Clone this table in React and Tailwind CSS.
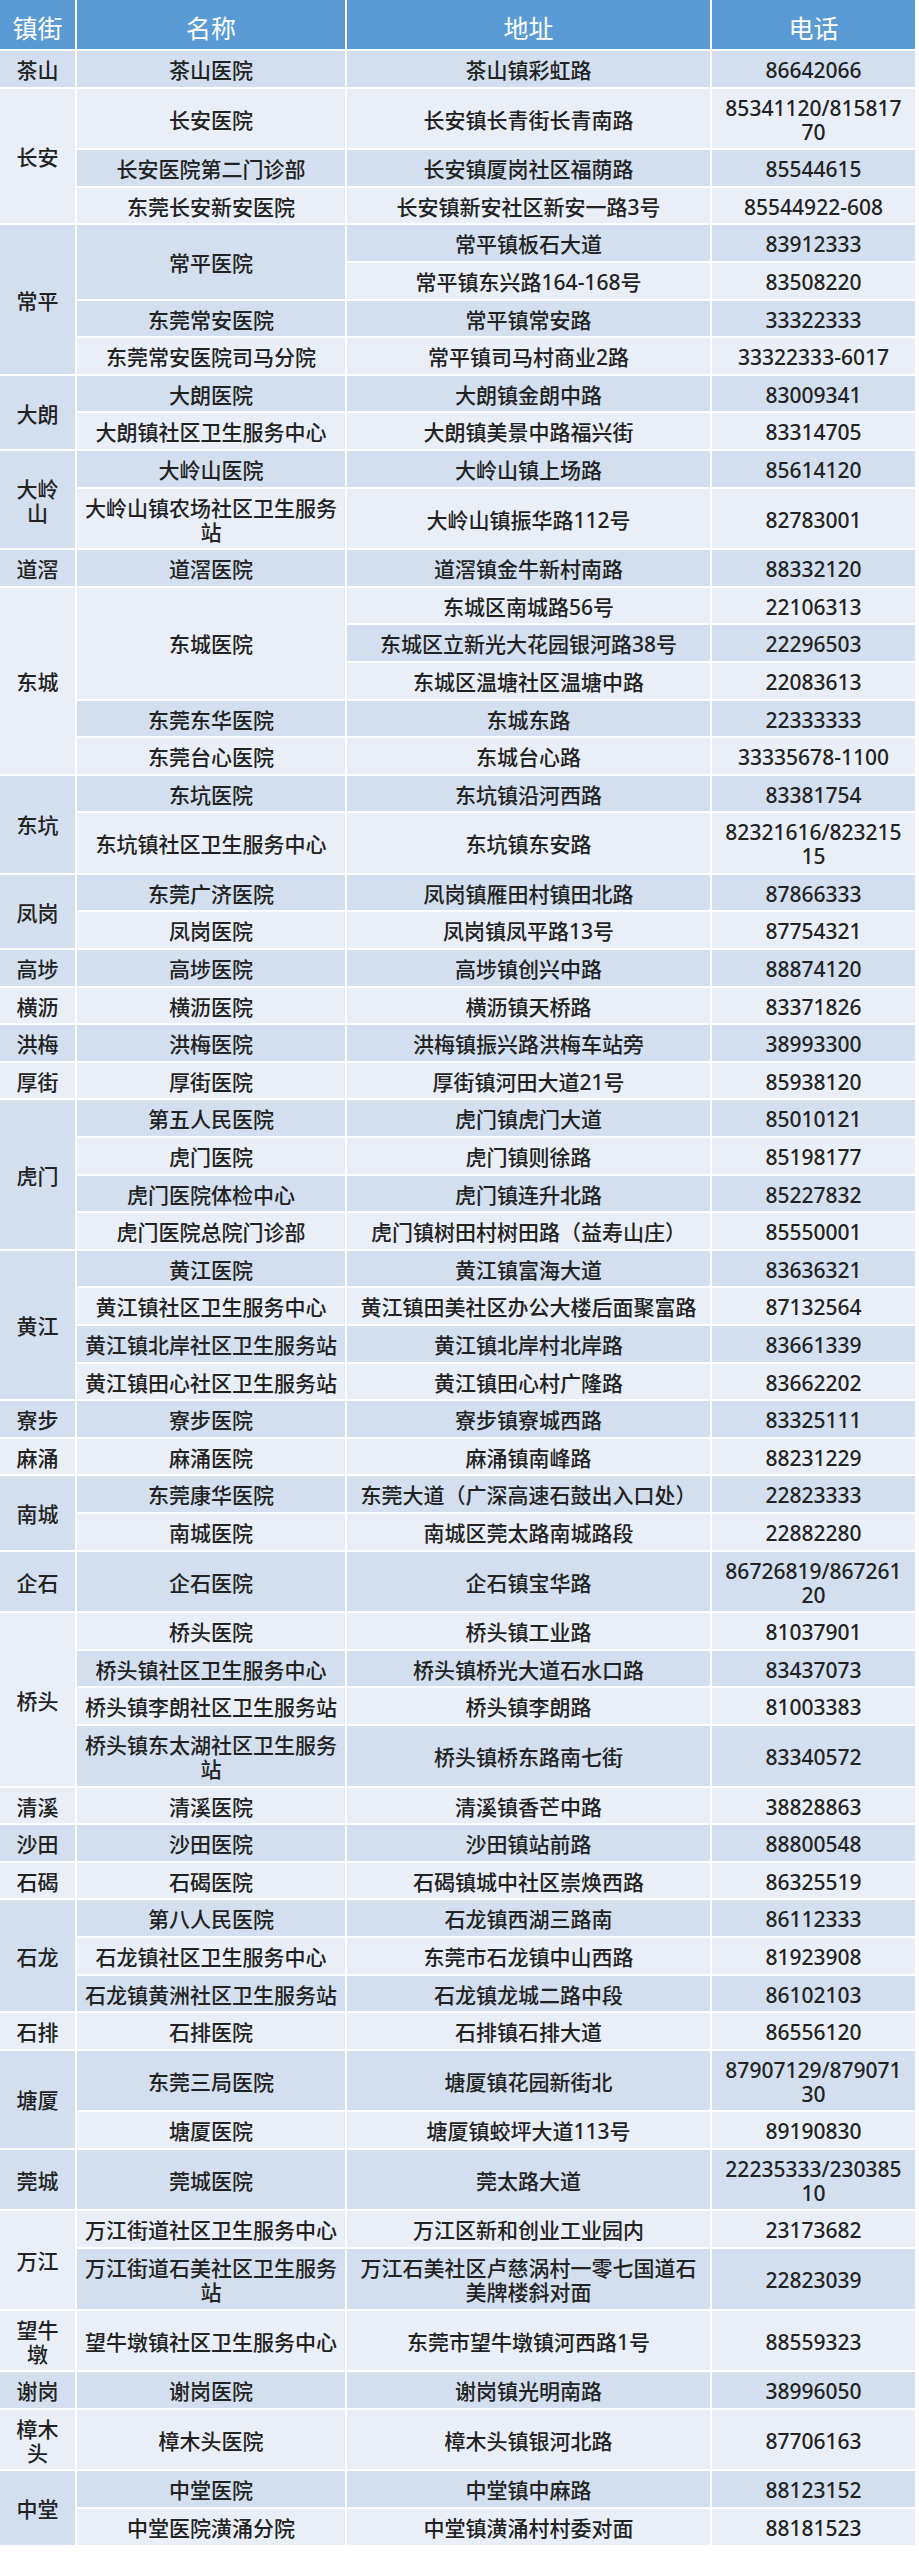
import React from 'react';

// 东莞各镇街医院一览表
const rows = [
  { town: '茶山', name: '茶山医院', addr: '茶山镇彩虹路', phone: '86642066' },
  { town: '长安', townSpan: 3, name: '长安医院', addr: '长安镇长青街长青南路', phone: '85341120/815817\n70' },
  { name: '长安医院第二门诊部', addr: '长安镇厦岗社区福荫路', phone: '85544615' },
  { name: '东莞长安新安医院', addr: '长安镇新安社区新安一路3号', phone: '85544922-608' },
  { town: '常平', townSpan: 4, name: '常平医院', nameSpan: 2, addr: '常平镇板石大道', phone: '83912333' },
  { addr: '常平镇东兴路164-168号', phone: '83508220' },
  { name: '东莞常安医院', addr: '常平镇常安路', phone: '33322333' },
  { name: '东莞常安医院司马分院', addr: '常平镇司马村商业2路', phone: '33322333-6017' },
  { town: '大朗', townSpan: 2, name: '大朗医院', addr: '大朗镇金朗中路', phone: '83009341' },
  { name: '大朗镇社区卫生服务中心', addr: '大朗镇美景中路福兴街', phone: '83314705' },
  { town: '大岭\n山', townSpan: 2, name: '大岭山医院', addr: '大岭山镇上场路', phone: '85614120' },
  { name: '大岭山镇农场社区卫生服务\n站', addr: '大岭山镇振华路112号', phone: '82783001' },
  { town: '道滘', name: '道滘医院', addr: '道滘镇金牛新村南路', phone: '88332120' },
  { town: '东城', townSpan: 5, name: '东城医院', nameSpan: 3, addr: '东城区南城路56号', phone: '22106313' },
  { addr: '东城区立新光大花园银河路38号', phone: '22296503' },
  { addr: '东城区温塘社区温塘中路', phone: '22083613' },
  { name: '东莞东华医院', addr: '东城东路', phone: '22333333' },
  { name: '东莞台心医院', addr: '东城台心路', phone: '33335678-1100' },
  { town: '东坑', townSpan: 2, name: '东坑医院', addr: '东坑镇沿河西路', phone: '83381754' },
  { name: '东坑镇社区卫生服务中心', addr: '东坑镇东安路', phone: '82321616/823215\n15' },
  { town: '凤岗', townSpan: 2, name: '东莞广济医院', addr: '凤岗镇雁田村镇田北路', phone: '87866333' },
  { name: '凤岗医院', addr: '凤岗镇凤平路13号', phone: '87754321' },
  { town: '高埗', name: '高埗医院', addr: '高埗镇创兴中路', phone: '88874120' },
  { town: '横沥', name: '横沥医院', addr: '横沥镇天桥路', phone: '83371826' },
  { town: '洪梅', name: '洪梅医院', addr: '洪梅镇振兴路洪梅车站旁', phone: '38993300' },
  { town: '厚街', name: '厚街医院', addr: '厚街镇河田大道21号', phone: '85938120' },
  { town: '虎门', townSpan: 4, name: '第五人民医院', addr: '虎门镇虎门大道', phone: '85010121' },
  { name: '虎门医院', addr: '虎门镇则徐路', phone: '85198177' },
  { name: '虎门医院体检中心', addr: '虎门镇连升北路', phone: '85227832' },
  { name: '虎门医院总院门诊部', addr: '虎门镇树田村树田路（益寿山庄）', phone: '85550001' },
  { town: '黄江', townSpan: 4, name: '黄江医院', addr: '黄江镇富海大道', phone: '83636321' },
  { name: '黄江镇社区卫生服务中心', addr: '黄江镇田美社区办公大楼后面聚富路', phone: '87132564' },
  { name: '黄江镇北岸社区卫生服务站', addr: '黄江镇北岸村北岸路', phone: '83661339' },
  { name: '黄江镇田心社区卫生服务站', addr: '黄江镇田心村广隆路', phone: '83662202' },
  { town: '寮步', name: '寮步医院', addr: '寮步镇寮城西路', phone: '83325111' },
  { town: '麻涌', name: '麻涌医院', addr: '麻涌镇南峰路', phone: '88231229' },
  { town: '南城', townSpan: 2, name: '东莞康华医院', addr: '东莞大道（广深高速石鼓出入口处）', phone: '22823333' },
  { name: '南城医院', addr: '南城区莞太路南城路段', phone: '22882280' },
  { town: '企石', name: '企石医院', addr: '企石镇宝华路', phone: '86726819/867261\n20' },
  { town: '桥头', townSpan: 4, name: '桥头医院', addr: '桥头镇工业路', phone: '81037901' },
  { name: '桥头镇社区卫生服务中心', addr: '桥头镇桥光大道石水口路', phone: '83437073' },
  { name: '桥头镇李朗社区卫生服务站', addr: '桥头镇李朗路', phone: '81003383' },
  { name: '桥头镇东太湖社区卫生服务\n站', addr: '桥头镇桥东路南七街', phone: '83340572' },
  { town: '清溪', name: '清溪医院', addr: '清溪镇香芒中路', phone: '38828863' },
  { town: '沙田', name: '沙田医院', addr: '沙田镇站前路', phone: '88800548' },
  { town: '石碣', name: '石碣医院', addr: '石碣镇城中社区崇焕西路', phone: '86325519' },
  { town: '石龙', townSpan: 3, name: '第八人民医院', addr: '石龙镇西湖三路南', phone: '86112333' },
  { name: '石龙镇社区卫生服务中心', addr: '东莞市石龙镇中山西路', phone: '81923908' },
  { name: '石龙镇黄洲社区卫生服务站', addr: '石龙镇龙城二路中段', phone: '86102103' },
  { town: '石排', name: '石排医院', addr: '石排镇石排大道', phone: '86556120' },
  { town: '塘厦', townSpan: 2, name: '东莞三局医院', addr: '塘厦镇花园新街北', phone: '87907129/879071\n30' },
  { name: '塘厦医院', addr: '塘厦镇蛟坪大道113号', phone: '89190830' },
  { town: '莞城', name: '莞城医院', addr: '莞太路大道', phone: '22235333/230385\n10' },
  { town: '万江', townSpan: 2, name: '万江街道社区卫生服务中心', addr: '万江区新和创业工业园内', phone: '23173682' },
  { name: '万江街道石美社区卫生服务\n站', addr: '万江石美社区卢慈涡村一零七国道石\n美牌楼斜对面', phone: '22823039' },
  { town: '望牛\n墩', name: '望牛墩镇社区卫生服务中心', addr: '东莞市望牛墩镇河西路1号', phone: '88559323' },
  { town: '谢岗', name: '谢岗医院', addr: '谢岗镇光明南路', phone: '38996050' },
  { town: '樟木\n头', name: '樟木头医院', addr: '樟木头镇银河北路', phone: '87706163' },
  { town: '中堂', townSpan: 2, name: '中堂医院', addr: '中堂镇中麻路', phone: '88123152' },
  { name: '中堂医院潢涌分院', addr: '中堂镇潢涌村村委对面', phone: '88181523' },
];

function Lines({ text }) {
  const parts = text.split('\n');
  return parts.map((p, i) => (
    <React.Fragment key={i}>
      {i > 0 && <br />}
      {p}
    </React.Fragment>
  ));
}

const cell = 'border-r-2 border-b-2 border-white px-[6px] pt-[7px] pb-[4.6px] text-center align-middle leading-[24px] whitespace-nowrap';
const head = 'border-r-2 border-b-2 border-white pt-[13px] pb-[6px] text-center align-middle leading-[30px] text-[25px] font-normal text-white';

export default function App() {
  return (
    <div className="bg-white w-[919px] pb-[8px]" style={{ fontFamily: '"Noto Sans", "Noto Sans CJK SC", sans-serif' }}>
      <table className="table-fixed border-separate border-spacing-0 w-[917px] text-[21px] font-medium text-[#222222]">
        <colgroup>
          <col className="w-[77px]" />
          <col className="w-[270px]" />
          <col className="w-[365px]" />
          <col className="w-[205px]" />
        </colgroup>
        <thead>
          <tr className="bg-[#5b9bd5]">
            <th className={head}>镇街</th>
            <th className={head}>名称</th>
            <th className={head}>地址</th>
            <th className={head}>电话</th>
          </tr>
        </thead>
        <tbody>
          {rows.map((r, i) => (
            <tr key={i} className={i % 2 === 0 ? 'bg-[#d3dfee]' : 'bg-[#eaeff7]'}>
              {r.town && (
                <td rowSpan={r.townSpan || 1} className={cell}>
                  <Lines text={r.town} />
                </td>
              )}
              {r.name && (
                <td rowSpan={r.nameSpan || 1} className={cell}>
                  <Lines text={r.name} />
                </td>
              )}
              <td className={cell}>
                <Lines text={r.addr} />
              </td>
              <td className={cell}>
                <Lines text={r.phone} />
              </td>
            </tr>
          ))}
        </tbody>
      </table>
    </div>
  );
}
